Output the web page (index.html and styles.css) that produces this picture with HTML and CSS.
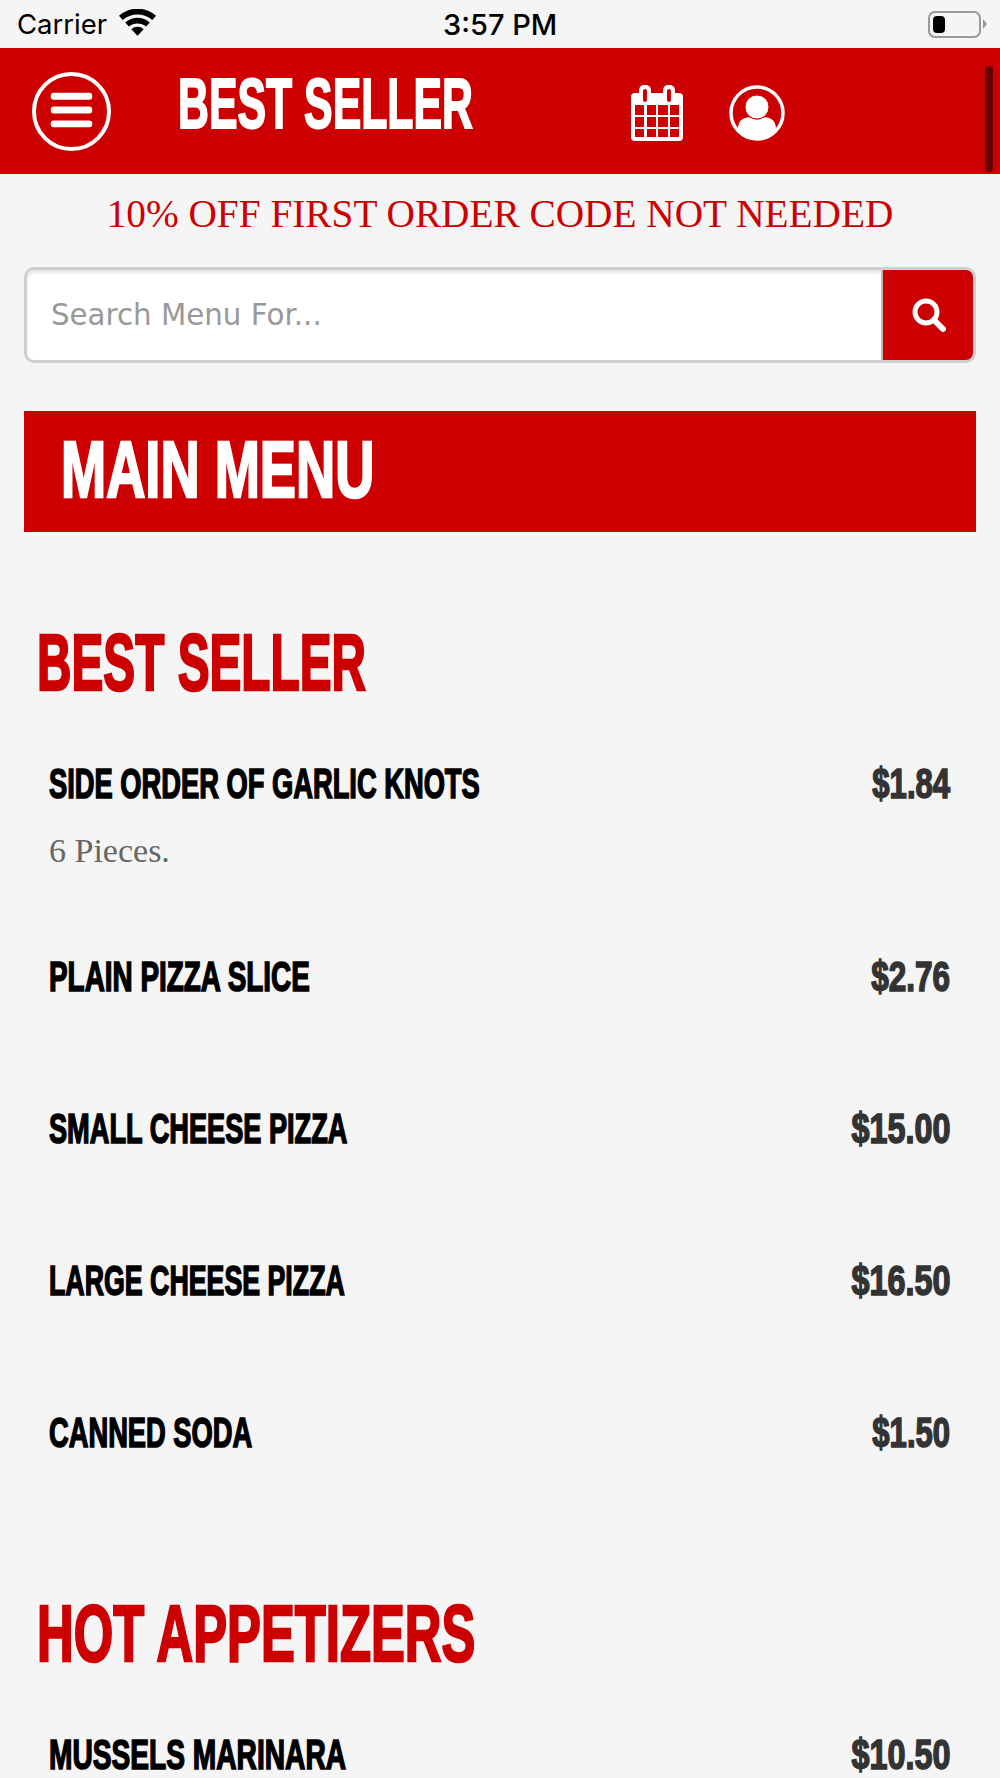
FILE: index.html
```html
<!DOCTYPE html>
<html lang="en">
<head>
  <meta charset="UTF-8" />
  <title>Main Menu</title>
  <link rel="stylesheet" href="styles.css">
</head>
<body>
  <!-- Status bar -->
  <div class="status-bar">
    <div class="status-left">
      <span>Carrier</span>
      <svg class="wifi" viewBox="0 0 36 26" width="37" height="27"><path d="M18 26 12 19.500a9 9 0 0 1 12 0Z"/><path d="M9.600 17 6 13a18 18 0 0 1 24 0l-3.600 4a13 13 0 0 0-16.800 0Z"/><path d="M3.600 10.500 0 6.500a27 27 0 0 1 36 0l-3.600 4a22 22 0 0 0-28.800 0Z"/></svg>
    </div>
    <div class="status-time">3:57 PM</div>
    <div class="battery"><span class="battery-level"></span></div>
  </div>

  <!-- Top bar -->
  <header class="top-bar">
    <svg class="menu-icon" viewBox="0 0 80 80" width="79" height="79">
      <circle cx="40" cy="40" r="38" fill="none" stroke="#fff" stroke-width="4"/>
      <rect x="19" y="21" width="42" height="7" rx="3" fill="#fff"/>
      <rect x="19" y="35" width="42" height="7" rx="3" fill="#fff"/>
      <rect x="19" y="49" width="42" height="7" rx="3" fill="#fff"/>
    </svg>
    <div class="top-title"><span class="squeeze fit-603">BEST SELLER</span></div>
    <svg class="cal-icon" viewBox="0 0 52 56" width="52" height="56">
      <path fill="#fff" fill-rule="evenodd" d="M4 8h4V5a5 5 0 0 1 5-5h2a5 5 0 0 1 5 5v3h12V5a5 5 0 0 1 5-5h2a5 5 0 0 1 5 5v3h4a4 4 0 0 1 4 4v40a4 4 0 0 1-4 4H4a4 4 0 0 1-4-4V12a4 4 0 0 1 4-4ZM12 6v9a2 2 0 0 0 4 0V6a2 2 0 0 0-4 0Zm24 0v9a2 2 0 0 0 4 0V6a2 2 0 0 0-4 0ZM4 20v10h9V20Zm12 0v10h9V20Zm11 0v10h10V20Zm12 0v10h9V20ZM4 32v10h9V32Zm12 0v10h9V32Zm11 0v10h10V32Zm12 0v10h9V32ZM4 44v8h9v-8Zm12 0v8h9v-8Zm11 0v8h10v-8Zm12 0v8h9v-8Z"/>
    </svg>
    <svg class="user-icon" viewBox="0 0 56 56" width="56" height="56">
      <circle cx="28" cy="28" r="26" fill="none" stroke="#fff" stroke-width="3.500"/>
      <path fill="#fff" d="M9 45c0-7 2-10 7-12 3-1 5-1 6 0 4 2 8 2 12 0 1-1 3-1 6 0 5 2 7 5 7 12a26 26 0 0 1-38 0Z"/>
      <circle cx="28" cy="22" r="12" fill="#fff" stroke="#cc0000"/>
    </svg>
    <span class="scroll-thumb"></span>
  </header>

  <p class="promo">10% OFF FIRST ORDER CODE NOT NEEDED</p>

  <form class="search">
    <input class="search-input" type="text" placeholder="Search Menu For..." />
    <button class="search-btn" type="button" aria-label="Search">
      <svg viewBox="0 0 36 36" width="36" height="36" fill="none" stroke="#fff"><circle cx="16" cy="15" r="11" stroke-width="5"/><path d="M24 23l9 9" stroke-width="6" stroke-linecap="round"/></svg>
    </button>
  </form>

  <h1 class="menu-banner"><span class="squeeze fit-678">MAIN MENU</span></h1>

  <!-- Categories -->
  <section class="category category-first">
    <h2 class="category-title"><span class="squeeze fit-597">BEST SELLER</span></h2>
    <div class="item item-desc-row">
      <div class="item-row"><span class="item-name squeeze fit-650">SIDE ORDER OF GARLIC KNOTS</span><span class="item-price squeeze fit-740">$1.84</span></div>
      <p class="item-desc">6 Pieces.</p>
    </div>
    <div class="item"><div class="item-row"><span class="item-name squeeze fit-664">PLAIN PIZZA SLICE</span><span class="item-price squeeze fit-750">$2.76</span></div></div>
    <div class="item"><div class="item-row"><span class="item-name squeeze fit-647">SMALL CHEESE PIZZA</span><span class="item-price squeeze fit-770">$15.00</span></div></div>
    <div class="item"><div class="item-row"><span class="item-name squeeze fit-637">LARGE CHEESE PIZZA</span><span class="item-price squeeze fit-770">$16.50</span></div></div>
    <div class="item"><div class="item-row"><span class="item-name squeeze fit-650">CANNED SODA</span><span class="item-price squeeze fit-740">$1.50</span></div></div>
  </section>

  <section class="category category-last">
    <h2 class="category-title"><span class="squeeze fit-635">HOT APPETIZERS</span></h2>
    <div class="item"><div class="item-row"><span class="item-name squeeze fit-670">MUSSELS MARINARA</span><span class="item-price squeeze fit-770">$10.50</span></div></div>
  </section>
</body>
</html>
```

FILE: styles.css
```css
/* Base */
* { box-sizing: border-box; margin: 0; padding: 0; }
html, body { height: 100%; overflow: hidden; }
body { background: #f5f5f5; color: #000; font-family: "Liberation Sans", sans-serif; }

/* Condensed headline look: no narrow font installed, so squeeze bold sans */
.squeeze { display: inline-block; white-space: nowrap; font-family: "Liberation Sans", sans-serif; font-weight: 700; transform-origin: left center; }
.fit-597 { transform: scaleX(0.597); }
.fit-603 { transform: scaleX(0.603); }
.fit-635 { transform: scaleX(0.635); }
.fit-637 { transform: scaleX(0.637); }
.fit-647 { transform: scaleX(0.647); }
.fit-650 { transform: scaleX(0.65); }
.fit-664 { transform: scaleX(0.664); }
.fit-670 { transform: scaleX(0.67); }
.fit-678 { transform: scaleX(0.678); }
.fit-740 { transform: scaleX(0.74); }
.fit-750 { transform: scaleX(0.75); }
.fit-770 { transform: scaleX(0.77); }

/* Status bar */
.status-bar { height: 48px; display: flex; align-items: center; justify-content: space-between; padding: 0 19px 0 17px; position: relative; }
.status-left { display: flex; align-items: center; gap: 12px; font: 27.5px "Inter", sans-serif; }
.wifi { margin-top: -4px; }
.status-time { position: absolute; left: 443px; font: 500 29px "Inter", sans-serif; }
.battery { width: 53px; height: 27px; border: 2px solid #999; border-radius: 7px; padding: 3px; position: relative; }
.battery::after { content: ""; position: absolute; right: -8px; top: 6px; border-left: 4px solid #999; border-top: 5px solid transparent; border-bottom: 5px solid transparent; }
.battery-level { display: block; width: 12px; height: 17px; background: #000; border-radius: 4px; }

/* Top bar */
.top-bar { height: 126px; background: #cc0000; display: flex; align-items: center; position: relative; padding-left: 32px; }
.menu-icon { flex: none; }
.top-title { flex: none; width: 520px; padding-left: 67px; margin-bottom: 14px; font-size: 71px; line-height: 80px; color: #fff; }
.top-title .squeeze { -webkit-text-stroke: 2px #fff; }
.cal-icon { margin-top: 4px; flex: none; }
.user-icon { margin: 4px 0 0 46px; flex: none; }
.scroll-thumb { position: absolute; right: 7px; top: 18px; width: 8px; height: 106px; border-radius: 4px; background: #660000; }

/* Promo and search */
.promo { margin-top: 20px; text-align: center; font: 39.3px/40px "Liberation Serif", serif; color: #cc0000; }
.search { margin: 33px 24px 0; height: 96px; display: flex; border: 3px solid #cfcfcf; border-radius: 10px; overflow: hidden; background: #fff; box-shadow: inset 0 3px 3px rgba(0,0,0,0.1); }
.search-input { flex: 1; border: none; outline: none; background: transparent; padding-left: 24px; font: 29.3px "DejaVu Sans", sans-serif; color: #333; }
.search-input::placeholder { color: #999; }
.search-btn { width: 92px; border: none; border-left: 2px solid #bbb; background: #cc0000; display: flex; align-items: center; justify-content: center; }

/* Banner */
.menu-banner { margin: 48px 24px 0; height: 121px; background: #cc0000; color: #fff; padding-left: 37px; font-size: 80px; line-height: 118px; }
.menu-banner .squeeze { -webkit-text-stroke: 2.5px #fff; }

/* Menu */
.category { padding: 0 24px; }
.category-first { padding-top: 58px; }
.category-title { margin: 27px 0 51px 13px; color: #cc0000; font-size: 80px; line-height: 92px; }
.category-title .squeeze { -webkit-text-stroke: 2.5px #cc0000; }
.item { height: 152px; padding: 0 26px 0 25px; }
.item-desc-row { height: 193px; }
.item-row { display: flex; justify-content: space-between; align-items: center; height: 48px; }
.item-name { font-size: 42px; -webkit-text-stroke: 1.6px #000; }
.item-price { font-size: 42px; color: #333; -webkit-text-stroke: 1.6px #333; transform-origin: right center; }
.item-desc { margin-top: 24px; font: 34px "Liberation Serif", serif; color: #666; }

/* Last row is cut off by the bottom of the window */
.category-last .item { height: 47px; overflow: hidden; }
.category-last .item-row { height: 47px; }
```
